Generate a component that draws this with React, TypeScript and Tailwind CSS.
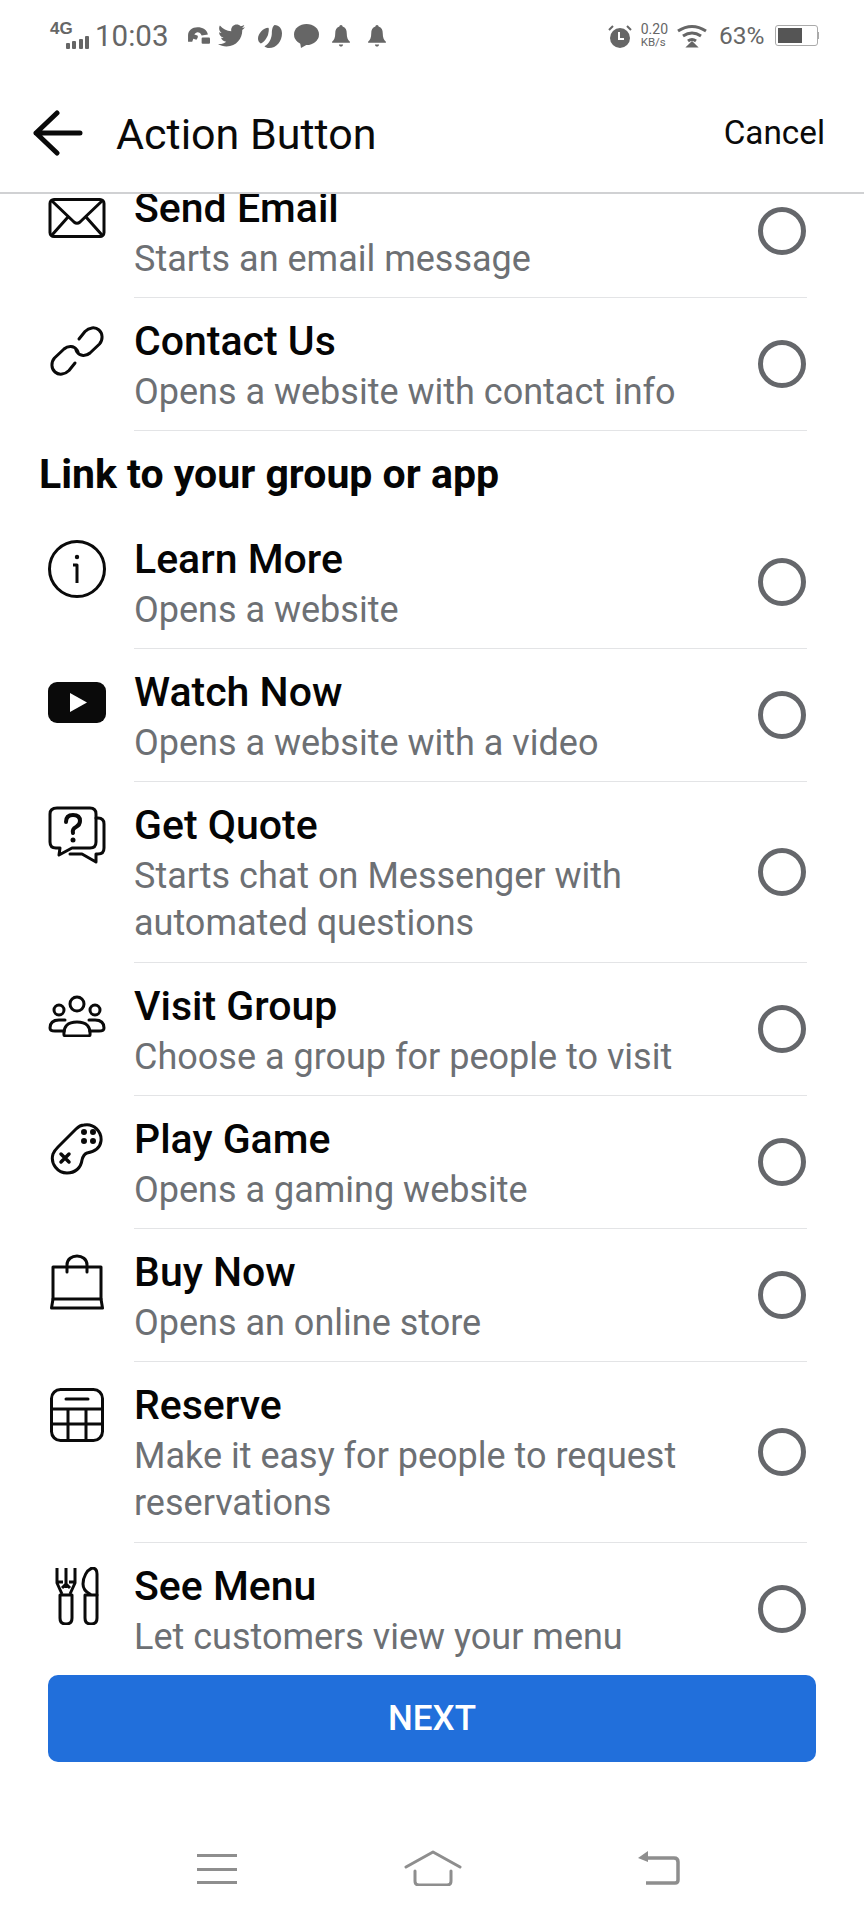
import type { ReactNode } from 'react';
import { FaTwitter } from 'react-icons/fa';

const font = "font-['Roboto',sans-serif]";

function Svg({ w, h, children, className }: { w: number; h: number; children: ReactNode; className?: string }) {
  return (
    <svg width={w} height={h} viewBox={`0 0 ${w} ${h}`} fill="none" stroke="#0a0a0a" strokeWidth="3" strokeLinecap="round" strokeLinejoin="round" className={className}>
      {children}
    </svg>
  );
}

const MailIcon = () => (
  <Svg w={58} h={40}>
    <rect x="2" y="1.5" width="54" height="37" rx="4" />
    <path d="M4 3l22 21q3 2.500 6 0L54 3M4 37l16-18M54 37L38 19" />
  </Svg>
);

const LinkIcon = () => (
  <Svg w={54} h={54}>
    <path d="M29 15l6-7.500c4-4 10-5 14-1.500s4 10 .5 14L40 29c-4 3.500-10 3.500-13-1l-1-2" />
    <path d="M25 39l-6 7.500c-4 4-10 5-14 1.500s-4-10-.5-14L14 25c4-3.500 10-3.500 13 1l1 2" />
  </Svg>
);

const InfoIcon = () => (
  <Svg w={58} h={58}>
    <circle cx="29" cy="29" r="27.500" />
    <circle cx="29" cy="17" r="2.200" fill="#0a0a0a" stroke="none" />
    <path d="M25 25h4v18" strokeLinecap="butt" />
  </Svg>
);

const VideoIcon = () => (
  <svg width="58" height="41" viewBox="0 0 58 41">
    <rect width="58" height="41" rx="9" fill="#0a0a0a" />
    <path d="M22 11l17 9.500L22 30z" fill="#fff" />
  </svg>
);

const QuoteIcon = () => (
  <Svg w={58} h={58}>
    <path d="M9 2h33q6 0 6 6v28q0 6-6 6H24l-13 7 1-7H8q-6 0-6-6V8q0-6 7-6z" />
    <path d="M48 12h2q6 0 6 6v24q0 6-6 6h-2l0 8-14-8H22" />
    <path d="M18 16q0-7 7-7t7 6q0 4-4 6t-3 6" strokeWidth="4" />
    <circle cx="25" cy="34" r="2.500" fill="#0a0a0a" stroke="none" />
  </Svg>
);

const GroupIcon = () => (
  <Svg w={58} h={42}>
    <circle cx="29" cy="9" r="7" />
    <circle cx="11" cy="15" r="5" />
    <circle cx="47" cy="15" r="5" />
    <path d="M16 40q-1-13 13-13t13 13q0 1-3 1H19q-3 0-3-1z" />
    <path d="M16 36H7q-5 0-5-3 0-8 9-8h6M42 36h9q5 0 5-3 0-8-9-8h-6" />
  </Svg>
);

const GameIcon = () => (
  <Svg w={54} h={54}>
    <path d="M34 3c10-2 18 7 17 16-1 8-8 11-14 12-3 1-4 3-5 7-1 8-7 13-15 13C8 51 0 42 3 32c1-3 3-5 5-7L26 7c2-2 5-4 8-4z" />
    <circle cx="34" cy="10" r="1.500" fill="#0a0a0a" />
    <circle cx="43" cy="10" r="1.500" fill="#0a0a0a" />
    <circle cx="34" cy="19" r="1.500" fill="#0a0a0a" />
    <circle cx="43" cy="19" r="1.500" fill="#0a0a0a" />
    <path d="M11 32l8 8M19 32l-8 8" strokeWidth="3.500" />
  </Svg>
);

const BagIcon = () => (
  <Svg w={54} h={56}>
    <path d="M3 45V13h48v32" />
    <path d="M1.500 54L3 45h48l1.500 9z" />
    <path d="M17 18V11c0-12 20-12 20 0v7" />
  </Svg>
);

const TableIcon = () => (
  <Svg w={54} h={54}>
    <rect x="1.500" y="1.500" width="51" height="51" rx="9" />
    <path d="M16 11h22" />
    <path d="M2 21h50M2 36h50M18 21v31M36 21v31" />
  </Svg>
);

const MenuIcon = () => (
  <Svg w={44} h={58}>
    <path d="M2 1v15l5 11M20 1v15l-5 11M11 1v20M2 15h6M20 15h-6M7 21l4-4 4 4" strokeLinecap="butt" />
    <path d="M5 28h12v23q0 6-6 6t-6-6z" />
    <path d="M37 1c-5 2-9 9-9 16 0 5 3 8 7 10M42 28V7c0-4-2-6-5-6" />
    <path d="M30 28h12v23q0 6-6 6t-6-6z" />
  </Svg>
);

function Row({ icon, title, sub, tall }: { icon: ReactNode; title: string; sub: ReactNode; tall?: boolean }) {
  return (
    <div className={tall ? 'flex h-[181px] shrink-0' : 'flex h-[133px] shrink-0'}>
      <div className="w-[134px] shrink-0 pl-[48px]">
        <div className="mt-[24px] flex h-[58px] w-[58px] items-center justify-center">{icon}</div>
      </div>
      <div className="flex w-[673px] items-center justify-between border-b-[1.500px] border-[#e3e4e6]">
        <div className="self-start pt-[20px]">
          <div className="text-[41px] leading-[47px] font-medium text-[#050505]">{title}</div>
          <div className="mt-[4px] text-[36px] leading-[46.500px] text-[#6d7074]">{sub}</div>
        </div>
        <div className="mr-[1px] h-[48px] w-[48px] rounded-full border-[5px] border-[#65676b]" />
      </div>
    </div>
  );
}

function Bell({ className }: { className: string }) {
  return (
    <svg className={className} width="18" height="22" viewBox="0 0 17 21" fill="#666">
      <path d="M8.500 0c1 0 1.500.7 1.500 1.500C13 2.500 14 5 14 8c0 4 1 6 3 8v1H0v-1c2-2 3-4 3-8 0-3 1-5.500 4-6.500C7 .7 7.500 0 8.500 0zM6.500 18.500h4c0 1-1 2-2 2s-2-1-2-2z" />
    </svg>
  );
}

function StatusBar() {
  return (
    <div className="flex h-[68px] items-center justify-between pl-[50px] pr-[45px] pt-[3px] text-[#666]">
      <div className="flex items-center">
        <div className="relative h-[26px] w-[39px]">
          <span className="absolute left-0 top-[-3px] text-[17px] leading-[18px] font-bold font-['Liberation_Sans',sans-serif]">4G</span>
          <div className="absolute bottom-0 right-0 flex items-end gap-[2.500px]">
            <div className="h-[6px] w-[4px] rounded-[1px] bg-[#666]" />
            <div className="h-[8px] w-[4px] rounded-[1px] bg-[#666]" />
            <div className="h-[10px] w-[4px] rounded-[1px] bg-[#666]" />
            <div className="h-[13px] w-[4px] rounded-[1px] bg-[#666]" />
          </div>
        </div>
        <span className="ml-[6px] text-[29.500px] leading-[34px]">10:03</span>
        <div className="ml-[19px] flex items-center">
          <svg width="23" height="19" viewBox="0 0 22 18" fill="#666">
            <path d="M1 15V9c0-5 4-8 9-8s9 2 10 7l-6 1c-1-2-2-3-4-3-1 0-2 1-3 2l3 1c1 1 0 3-1 4l-3-1-1 3z" />
            <rect x="14" y="11" width="8" height="6" rx="1" />
          </svg>
          <FaTwitter className="ml-[8px] h-[27px] w-[27px]" />
          <svg className="ml-[13px]" width="24" height="24" viewBox="0 0 26 26" fill="#666">
            <path d="M18 1c5 0 8 4 8 9 0 9-6 16-14 16-2 0-4-1-5-2 5-2 8-9 8-14 0-4 1-8 3-9zM11 4c1 0 1 3 0 7-1 4-5 9-8 10-2-1-3-3-3-5 0-6 6-12 11-12z" />
          </svg>
          <svg className="ml-[12px]" width="25" height="24" viewBox="0 0 25 24" fill="#666">
            <ellipse cx="12.500" cy="10.500" rx="12.500" ry="10.500" />
            <path d="M6 18l1 6 7-4z" />
          </svg>
          <Bell className="ml-[13px]" />
          <Bell className="ml-[18px]" />
        </div>
      </div>
      <div className="flex items-center">
        <svg width="24" height="24" viewBox="0 0 24 24" fill="#666">
          <circle cx="12" cy="14" r="10" />
          <path d="M1 6l4-4M23 6l-4-4" stroke="#666" strokeWidth="2" />
          <path d="M11 8v7h5" stroke="#fff" strokeWidth="2" fill="none" />
        </svg>
        <div className="ml-[9px] flex flex-col items-start text-[#666]">
          <span className="text-[14px] leading-[13px]">0.20</span>
          <span className="text-[11.500px] leading-[13px]">KB/s</span>
        </div>
        <svg className="ml-[9px]" width="30" height="24" viewBox="0 0 30 24" fill="none" stroke="#666" strokeWidth="3">
          <path d="M1 7q14-9 28 0M6 12q9-6 18 0M11 17q4-3 8 0" />
          <path d="M15 19l3 3h-6z" fill="#666" />
        </svg>
        <span className="ml-[12px] text-[24.500px] leading-[30px]">63%</span>
        <div className="ml-[10px] flex h-[21px] w-[43px] items-center rounded-[3px] border-[1.500px] border-[#aaa] p-[2px]">
          <div className="h-full w-[24px] bg-[#555]" />
        </div>
        <div className="h-[7px] w-[1.500px] bg-[#aaa]" />
      </div>
    </div>
  );
}

export default function App() {
  return (
    <div className={`${font} flex h-[1920px] w-[864px] flex-col overflow-hidden bg-white`}>
      <StatusBar />

      {/* Header */}
      <div className="relative z-10 flex h-[126px] shrink-0 items-center justify-between border-b-2 border-[#d0d1d3] bg-white pl-[33px] pr-[39px] pt-[6px]">
        <div className="flex items-center">
          <svg width="50" height="46" viewBox="0 0 50 46" fill="none" stroke="#0a0a0a" strokeWidth="5" strokeLinecap="round" strokeLinejoin="round">
            <path d="M47 23H3M24 3L3 23l21 20" />
          </svg>
          <span className="ml-[33px] mt-[2px] text-[43px] leading-[48px] text-[#0a0a0a]">Action Button</span>
        </div>
        <span className="text-[33.300px] leading-[40px] text-[#0a0a0a]">Cancel</span>
      </div>

      {/* List, scrolled a little so the first row runs under the header */}
      <div className="min-h-0 flex-1 overflow-hidden">
        <div className="mt-[-29px] flex flex-col">
          <Row icon={<MailIcon />} title="Send Email" sub="Starts an email message" />
          <Row icon={<LinkIcon />} title="Contact Us" sub="Opens a website with contact info" />
          <div className="flex h-[85px] shrink-0 items-start pl-[39px] pt-[20px] text-[41px] leading-[47px] font-bold text-[#050505]">
            Link to your group or app
          </div>
          <Row icon={<InfoIcon />} title="Learn More" sub="Opens a website" />
          <Row icon={<VideoIcon />} title="Watch Now" sub="Opens a website with a video" />
          <Row icon={<QuoteIcon />} tall title="Get Quote" sub={<>Starts chat on Messenger with<br />automated questions</>} />
          <Row icon={<GroupIcon />} title="Visit Group" sub="Choose a group for people to visit" />
          <Row icon={<GameIcon />} title="Play Game" sub="Opens a gaming website" />
          <Row icon={<BagIcon />} title="Buy Now" sub="Opens an online store" />
          <Row icon={<TableIcon />} tall title="Reserve" sub={<>Make it easy for people to request<br />reservations</>} />
          <Row icon={<MenuIcon />} title="See Menu" sub="Let customers view your menu" />
        </div>
      </div>

      {/* Next button */}
      <div className="shrink-0 px-[48px] pb-[158px] pt-[15px]">
        <div className="flex h-[87px] items-center justify-center rounded-[10px] bg-[#216fdb] pt-[1px] text-[35px] font-medium text-white">
          NEXT
        </div>
      </div>

      {/* Android nav bar, laid over the bottom strip */}
      <div className="relative z-10 mt-[-75px] flex h-[75px] shrink-0 items-start">
        <div className="ml-[197px] mt-[9px] flex h-[30px] w-[40px] flex-col justify-between">
          <div className="h-[3px] bg-[#8e8e8e]" />
          <div className="h-[3px] bg-[#8e8e8e]" />
          <div className="h-[3px] bg-[#8e8e8e]" />
        </div>
        <svg className="ml-[167px] mt-[5px]" width="58" height="36" viewBox="0 0 58 36" fill="none" stroke="#8e8e8e" strokeWidth="3" strokeLinecap="round" strokeLinejoin="round">
          <path d="M2 17L29 2l27 15" />
          <path d="M11 21v10q0 4 4 4h28q4 0 4-4V21" />
        </svg>
        <svg className="ml-[175px] mt-[5px]" width="44" height="36" viewBox="0 0 44 36" fill="none" stroke="#8e8e8e" strokeWidth="3.500">
          <path d="M10 8h27q4 0 4 4v18q0 3-3 3H9" />
          <path d="M11 1v11L1 8z" fill="#8e8e8e" stroke="none" />
        </svg>
      </div>
    </div>
  );
}
